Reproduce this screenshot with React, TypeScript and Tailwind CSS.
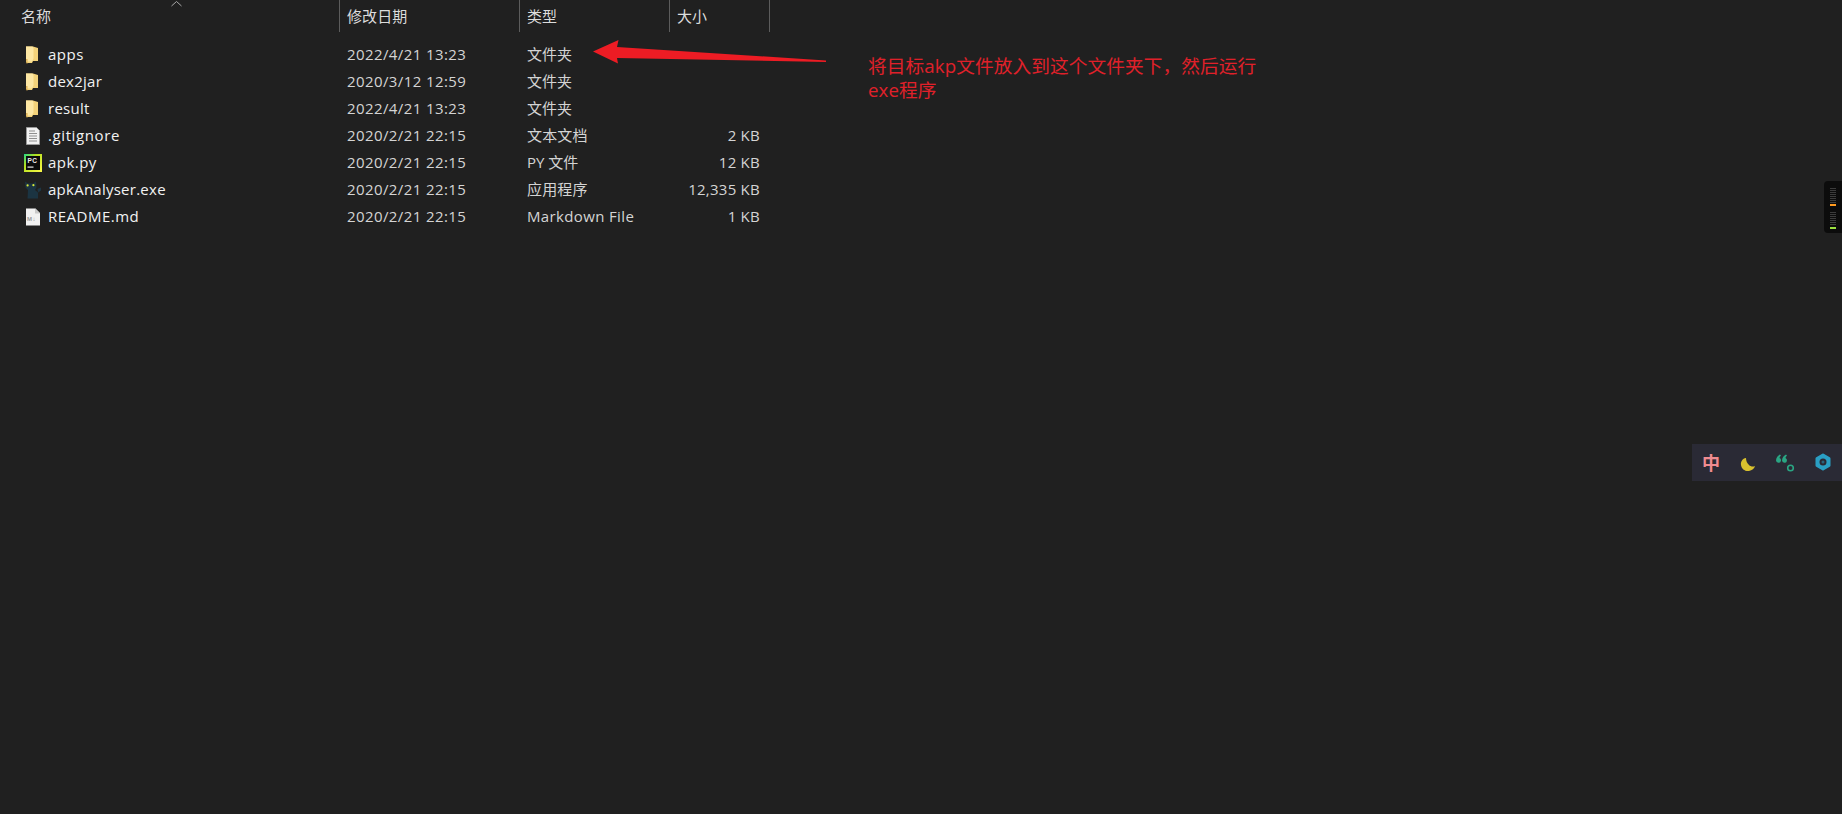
const font = "font-['Open_Sans','Noto_Sans_CJK_SC',sans-serif]";

function Folder() {
  return (
    <svg width="18" height="18" viewBox="0 0 18 18">
      <path d="M2 0.500H9L14 2V15H9L8 17H3L2 16Z" fill="#f3d27a" />
      <path d="M2 0.500H8.500L9.500 2V12.500L8 15.500H3.500L2 16Z" fill="#fde7a4" />
      <path d="M2 13H3.500V17.500H2.500Z" fill="#dcae50" />
    </svg>
  );
}

function TextDoc() {
  return (
    <svg width="18" height="18" viewBox="0 0 18 18">
      <path d="M2.500 0.500h10l3 3v14h-13z" fill="#f2f2f2" stroke="#9a9a9a" />
      <path d="M5 4h6M5 6.500h8M5 9h8M5 11.500h8M5 14h8" stroke="#8f8f8f" strokeWidth="1" />
    </svg>
  );
}

function PyCharm() {
  return (
    <svg width="18" height="18" viewBox="0 0 18 18">
      <defs>
        <linearGradient id="pc" x1="0" y1="0" x2="1" y2="1">
          <stop offset="0" stopColor="#21d789" />
          <stop offset="0.35" stopColor="#b4e01f" />
          <stop offset="1" stopColor="#fcf84a" />
        </linearGradient>
      </defs>
      <rect width="18" height="18" fill="url(#pc)" />
      <rect x="2" y="2" width="14" height="14" fill="#0b0b0b" />
      <text x="3.500" y="8.500" fontSize="6.500" fontWeight="700" fill="#f0f0f0" fontFamily="Liberation Sans">PC</text>
      <rect x="3.500" y="12.500" width="6" height="1.200" fill="#e8e8e8" />
    </svg>
  );
}

function Cat() {
  return (
    <svg width="18" height="18" viewBox="0 0 18 18">
      <path d="M1 0.500L4 2.500H9L12 0.500L12.500 6.500L11 9L14 11.500V17.500H3.500L4 9L1.500 6.500Z" fill="#1b3442" />
      <path d="M13.500 8L17 6.500V9.500L14 11.500Z" fill="#1d3644" />
      <circle cx="3.600" cy="4.400" r="1.100" fill="#d8e838" />
      <circle cx="9.400" cy="4.200" r="1.100" fill="#d8e838" />
    </svg>
  );
}

function MdFile() {
  return (
    <svg width="18" height="18" viewBox="0 0 18 18">
      <path d="M2 0.500h9.500l4.500 4.500v12.500h-14z" fill="#f1f1f1" />
      <path d="M11 0.500l5 5H11z" fill="#c9c9c9" />
      <text x="3" y="13" fontSize="6" fontWeight="700" fill="#9a9a9a" fontFamily="Liberation Sans">M↓</text>
    </svg>
  );
}

const rows = [
  { icon: <Folder />, name: "apps", nameClass: "tracking-[0.5px]", date: "2022/4/21 13:23", type: "文件夹", typeClass: "", size: "" },
  { icon: <Folder />, name: "dex2jar", nameClass: "tracking-[0.25px]", date: "2020/3/12 12:59", type: "文件夹", typeClass: "", size: "" },
  { icon: <Folder />, name: "result", nameClass: "tracking-[0.25px]", date: "2022/4/21 13:23", type: "文件夹", typeClass: "", size: "" },
  { icon: <TextDoc />, name: ".gitignore", nameClass: "tracking-[0.6px]", date: "2020/2/21 22:15", type: "文本文档", typeClass: "tracking-[0.15px]", size: "2 KB" },
  { icon: <PyCharm />, name: "apk.py", nameClass: "tracking-[0.45px]", date: "2020/2/21 22:15", type: "PY 文件", typeClass: "", size: "12 KB" },
  { icon: <Cat />, name: "apkAnalyser.exe", nameClass: "tracking-[0.25px]", date: "2020/2/21 22:15", type: "应用程序", typeClass: "tracking-[0.15px]", size: "12,335 KB" },
  { icon: <MdFile />, name: "README.md", nameClass: "tracking-[0.5px]", date: "2020/2/21 22:15", type: "Markdown File", typeClass: "tracking-[0.36px]", size: "1 KB" },
];

const cols = "grid grid-cols-[340px_180px_150px_100px] w-[770px]";

export default function App() {
  return (
    <div className={`relative w-[1842px] h-[814px] overflow-hidden bg-[#202020] text-[15px] ${font}`}>
      {/* column header */}
      <div className={`${cols} h-[32px] text-[#dcdcdc] tracking-[0.1px]`}>
        <div className="relative flex items-center pl-[21px] pt-[1px] border-r border-[#5c5c5c]">
          名称
          <svg className="absolute left-[171px] top-0" width="11" height="7" viewBox="0 0 11 7">
            <path d="M0.500 6L5.500 1.500L10.500 6" fill="none" stroke="#a8a8a8" strokeWidth="1" />
          </svg>
        </div>
        <div className="flex items-center pl-[7px] pt-[1px] border-r border-[#5c5c5c]">修改日期</div>
        <div className="flex items-center pl-[7px] pt-[1px] border-r border-[#5c5c5c]">类型</div>
        <div className="flex items-center pl-[7px] pt-[1px] border-r border-[#5c5c5c]">大小</div>
      </div>

      {/* file rows */}
      <div className="pt-[9px]">
        {rows.map((r) => (
          <div key={r.name} className={`${cols} h-[27px] items-center`}>
            <div className={`flex items-center gap-[6px] pl-[24px] text-[#f2f2f2] ${r.nameClass}`}>
              <span className="flex w-[18px] h-[18px] shrink-0">{r.icon}</span>
              {r.name}
            </div>
            <div className="pl-[7px] text-[#d4d4d4] tracking-[0.4px]">{r.date}</div>
            <div className={`pl-[7px] text-[#d4d4d4] ${r.typeClass}`}>{r.type}</div>
            <div className="pr-[10px] text-right text-[#d4d4d4] tracking-[0.25px]">{r.size}</div>
          </div>
        ))}
      </div>

      {/* annotation arrow */}
      <svg className="absolute left-[590px] top-[36px]" width="240" height="32" viewBox="590 36 240 32">
        <path d="M593 51.500L618.500 40L617 47L826 60.500L826 62L617 58L618 63.500Z" fill="#ed1c24" />
      </svg>

      {/* annotation text */}
      <div className="absolute left-[868px] top-[54px] w-[420px] text-[18.67px] leading-[24px] tracking-[0.1px] text-[#e0202a]">
        将目标akp文件放入到这个文件夹下，然后运行
        <br />
        exe程序
      </div>

      {/* volume meter */}
      <div className="absolute right-0 top-[181px] w-[18px] h-[52px] bg-[#0c0c0c] rounded-l-[4px] flex flex-col items-center gap-[6px] pt-[7px]">
        <div className="flex flex-col gap-[1px] w-[6px]">
          {[0, 1, 2, 3, 4, 5, 6, 7].map((i) => (
            <div key={i} className="h-[1px] bg-[#3c3c3c]" />
          ))}
          <div className="h-[2px] bg-[#ff9a1f]" />
        </div>
        <div className="flex flex-col gap-[1px] w-[6px]">
          {[0, 1, 2, 3, 4, 5, 6].map((i) => (
            <div key={i} className="h-[1px] bg-[#3c3c3c]" />
          ))}
          <div className="h-[2px] mt-[1px] bg-[#9be040]" />
        </div>
      </div>

      {/* input-method toolbar */}
      <div className="absolute right-0 top-[444px] w-[150px] h-[37px] bg-[#2a2a35] flex items-center justify-between pl-[10px] pr-[10px]">
        <span className="text-[#ef8b90] text-[18px] font-semibold w-[18px] leading-none">中</span>
        <svg width="18" height="18" viewBox="0 0 18 18" className="mt-[5px]">
          <path d="M7 2C3.500 2.500 1.500 5.500 2 9C2.500 13 6 15.500 10 15C13 14.500 15.500 12.500 16 10C14 11 11.500 10.500 10 9C8 7 7 5 7 2Z" fill="#d9c12e" />
        </svg>
        <svg width="20" height="20" viewBox="0 0 20 20">
          <path d="M5 1.500C3 2.500 1 4.500 1 7.500A2.500 2.500 0 1 0 4.500 5C4.500 4.500 5 3.500 6 2.500Z" fill="#2aa583" />
          <path d="M11 1.500C9 2.500 7 4.500 7 7.500A2.500 2.500 0 1 0 10.500 5C10.500 4.500 11 3.500 12 2.500Z" fill="#2aa583" />
          <circle cx="15.500" cy="15" r="2.800" fill="none" stroke="#2aa583" strokeWidth="1.600" />
        </svg>
        <svg width="18" height="18" viewBox="0 0 18 18" className="-mt-[2px]">
          <path d="M9 2L15 5.500V12.500L9 16L3 12.500V5.500Z" fill="#2a9fc4" stroke="#2a9fc4" strokeWidth="3" strokeLinejoin="round" />
          <circle cx="9" cy="9" r="3.500" fill="#2a2a35" />
          <circle cx="9" cy="9" r="1.500" fill="#2a9fc4" opacity="0.500" />
        </svg>
      </div>
    </div>
  );
}
